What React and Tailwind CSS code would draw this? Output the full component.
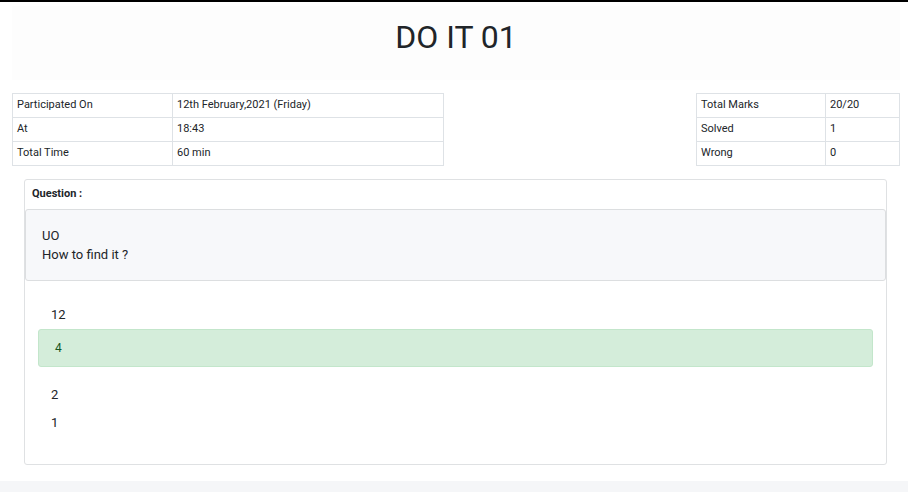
import React from "react";

const leftRows = [
  ["Participated On", "12th February,2021 (Friday)"],
  ["At", "18:43"],
  ["Total Time", "60 min"],
];

const rightRows = [
  ["Total Marks", "20/20"],
  ["Solved", "1"],
  ["Wrong", "0"],
];

const InfoTable = ({ rows, className, firstCol }) => (
  <table className={`border-collapse text-[11px] text-[#212529] ${className}`}>
    <tbody>
      {rows.map(([k, v]) => (
        <tr key={k} className="h-6">
          <td className={`border border-[#dee2e6] px-1 pt-[1px] pb-0 ${firstCol}`}>{k}</td>
          <td className="border border-[#dee2e6] px-1 pt-[1px] pb-0">{v}</td>
        </tr>
      ))}
    </tbody>
  </table>
);

const App = () => {
  return (
    <div
      className="w-full bg-white min-h-[492px] flex flex-col text-[#212529]"
      style={{ fontFamily: "Roboto, 'Liberation Sans', sans-serif" }}
    >
      <div className="h-[1.5px] bg-black" />
      <div className="pl-3 pr-[8px] pt-[4px]">
        <div className="bg-[#fdfdfd] h-[74px] flex justify-center pt-[15px]">
          <h1 className="text-[32px] font-normal leading-none text-[#212529]">
            DO IT 01
          </h1>
        </div>

        <div className="flex justify-between items-start mt-[13px]">
          <InfoTable rows={leftRows} className="w-[432px]" firstCol="w-[160px]" />
          <InfoTable rows={rightRows} className="w-[204px]" firstCol="w-[129px]" />
        </div>

        <div className="ml-3 mr-[13px] mt-[13px] border border-[#dfe1e3] rounded-[3px]">
          <div className="h-[29px] flex items-center px-[7px] text-[11px] font-bold">
            Question :
          </div>
          <div className="bg-[#f7f8fa] border border-[#dcdee0] rounded-[3px] h-[72px] px-[16px] pt-[16px] text-[13px] leading-[19px]">
            <div>UO</div>
            <div>How to find it ?</div>
          </div>
          <div className="px-[13px] pt-[25px] pb-[32px] text-[13px]">
            <div className="px-[13px] h-[18px] flex items-center">12</div>
            <div className="mt-[5px] h-[38px] bg-[#d4edda] border border-[#c3e6cb] rounded-[3px] flex items-center px-[16px] text-[#155724] text-[12px]">
              4
            </div>
            <div className="mt-[19px] px-[13px] h-[18px] flex items-center">2</div>
            <div className="mt-[10px] px-[13px] h-[18px] flex items-center">1</div>
          </div>
        </div>
      </div>
      <div className="mt-auto h-[11px] bg-[#f5f6f8]" />
    </div>
  );
};

export default App;
